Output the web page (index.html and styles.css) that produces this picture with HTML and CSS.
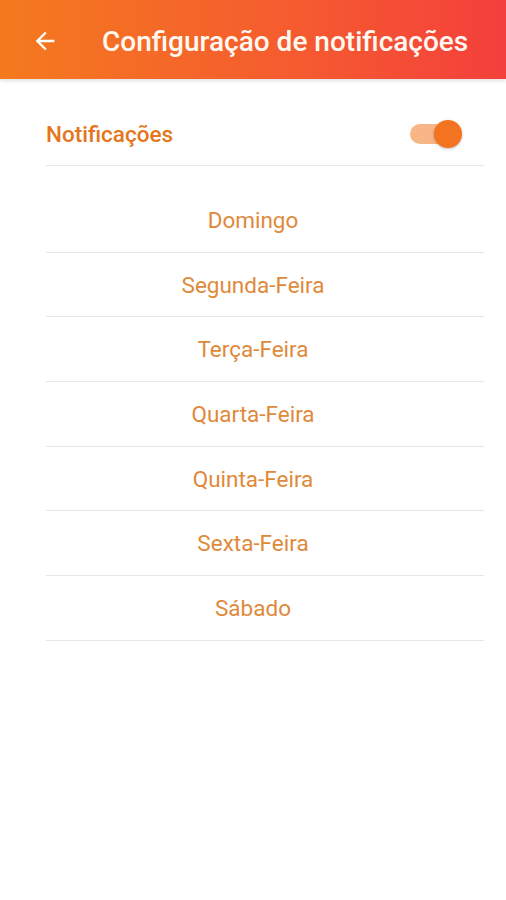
FILE: index.html
```html
<!DOCTYPE html>
<html lang="pt">
<head>
    <meta charset="UTF-8">
    <meta name="viewport" content="width=device-width, initial-scale=1.0">
    <title>Configuração de notificações</title>
    <link rel="stylesheet" href="styles.css">
</head>
<body>
    <div class="app">
        <div class="header">
            <span class="back-button">
                <svg width="28" height="28" viewBox="0 0 24 24">
                    <path d="M20 11H7.83l5.59-5.59L12 4l-8 8 8 8 1.41-1.41L7.83 13H20v-2z" fill="#fff"/>
                </svg>
            </span>
            <h1>Configuração de notificações</h1>
        </div>

        <div class="content">
            <div class="notif-row">
                <span class="notif-label">Notificações</span>
                <span class="switch">
                    <span class="switch-track"></span>
                    <span class="switch-thumb"></span>
                </span>
            </div>

            <div class="days">
                <div class="day">Domingo</div>
                <div class="day">Segunda-Feira</div>
                <div class="day">Terça-Feira</div>
                <div class="day">Quarta-Feira</div>
                <div class="day">Quinta-Feira</div>
                <div class="day">Sexta-Feira</div>
                <div class="day">Sábado</div>
            </div>
        </div>
    </div>
</body>
</html>
```

FILE: styles.css
```css
* {
    margin: 0;
    padding: 0;
    box-sizing: border-box;
}

body {
    font-family: Roboto, 'Noto Sans', sans-serif;
    background: #fff;
    width: 506px;
    min-height: 900px;
}

.header {
    height: 79px;
    background: linear-gradient(90deg, #f47a1e 0%, #f55a30 60%, #f43f3c 100%);
    display: flex;
    align-items: center;
    padding-left: 31px;
    padding-top: 3px;
    box-shadow: 0 2px 4px rgba(0, 0, 0, 0.12);
}

.back-button {
    display: flex;
    width: 28px;
    height: 28px;
    margin-right: 43px;
}

.header h1 {
    color: #fff8f0;
    font-size: 28px;
    font-weight: 500;
}

.content {
    padding: 23px 22px 0 46px;
}

.notif-row {
    height: 64px;
    display: flex;
    align-items: center;
    justify-content: space-between;
    border-bottom: 1px solid #e6e6e6;
}

.notif-label {
    color: #e57620;
    font-size: 22.5px;
    font-weight: 500;
}

.switch {
    position: relative;
    width: 52px;
    height: 28px;
    margin-right: 22px;
}

.switch-track {
    position: absolute;
    left: 0;
    top: 4px;
    width: 44px;
    height: 20px;
    border-radius: 10px;
    background: #f8b585;
}

.switch-thumb {
    position: absolute;
    right: 0;
    top: 0;
    width: 28px;
    height: 28px;
    border-radius: 50%;
    background: #f37320;
    box-shadow: 0 1px 3px rgba(0, 0, 0, 0.25);
}

.days {
    margin-top: 22px;
}

.day {
    height: 64.7px;
    display: flex;
    align-items: center;
    justify-content: center;
    padding-right: 24px;
    border-bottom: 1px solid #e6e6e6;
    color: #e0893a;
    font-size: 22.5px;
}
```
